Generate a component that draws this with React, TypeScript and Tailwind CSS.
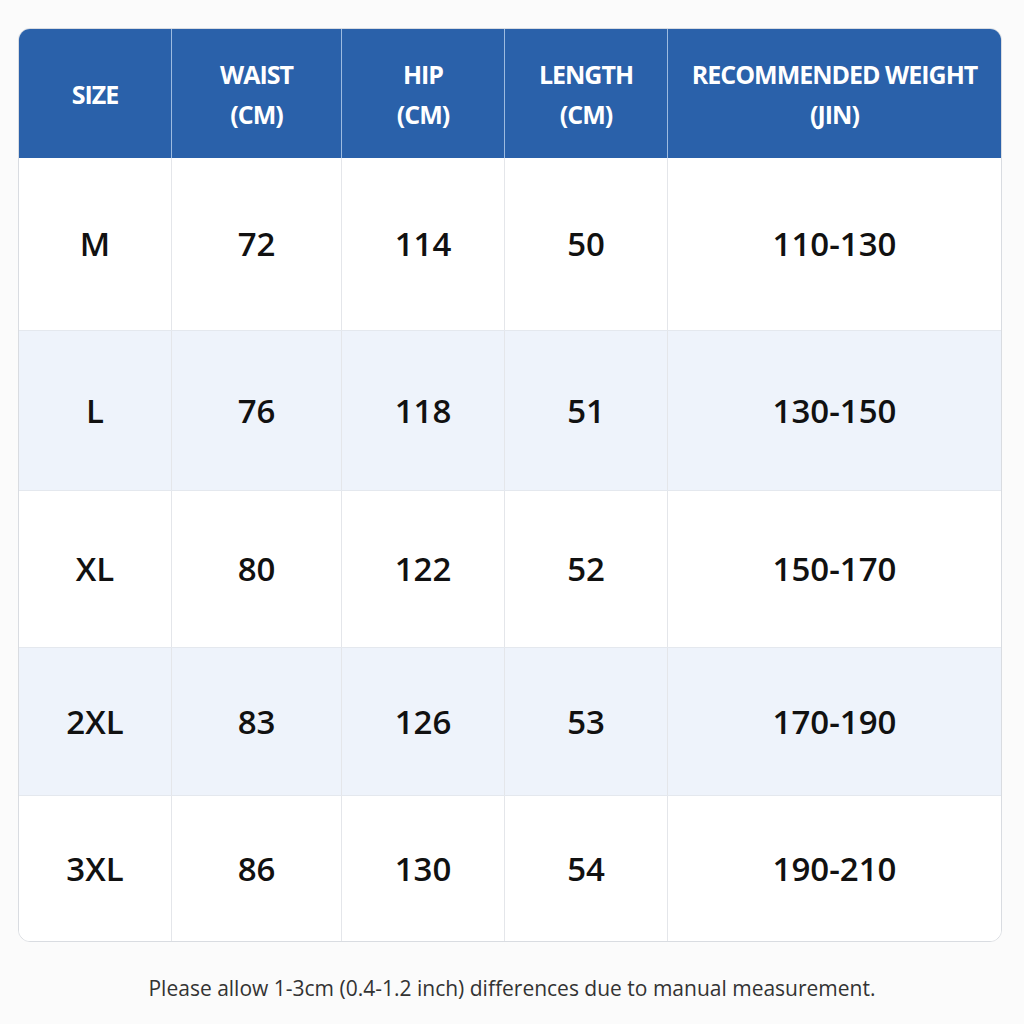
const HEADERS = [
  ["SIZE"],
  ["WAIST", "(CM)"],
  ["HIP", "(CM)"],
  ["LENGTH", "(CM)"],
  ["RECOMMENDED WEIGHT", "(JIN)"],
];

const ROWS = [
  { h: "h-[172px]", cells: ["M", "72", "114", "50", "110-130"], alt: false },
  { h: "h-[160px]", cells: ["L", "76", "118", "51", "130-150"], alt: true },
  { h: "h-[157px]", cells: ["XL", "80", "122", "52", "150-170"], alt: false },
  { h: "h-[148px]", cells: ["2XL", "83", "126", "53", "170-190"], alt: true },
  { h: "h-[146px]", cells: ["3XL", "86", "130", "54", "190-210"], alt: false },
];

const COLS = "grid grid-cols-[152px_170px_163px_163px_1fr]";

export default function App() {
  return (
    <div className="min-h-[1024px] w-[1024px] bg-[#fbfbfb] pt-[28px] font-['Open_Sans',sans-serif]">
      <div className="ml-[18px] w-[984px] overflow-hidden rounded-[12px] border border-[#d9dce1] bg-white">
        {/* header */}
        <div className={`${COLS} h-[129px] bg-[#2a61aa] text-white`}>
          {HEADERS.map((lines, i) => (
            <div
              key={i}
              className={`flex flex-col items-center justify-center text-[25px] font-bold leading-[40px] tracking-[-0.04em] ${
                i > 0 ? "border-l border-[#9dbbe0]" : ""
              }`}
            >
              {lines.map((l) => (
                <span key={l}>{l}</span>
              ))}
            </div>
          ))}
        </div>

        {/* rows */}
        {ROWS.map((row, r) => (
          <div
            key={r}
            className={`${COLS} ${row.h} ${row.alt ? "bg-[#eef3fb]" : "bg-white"} ${
              r > 0 ? "border-t border-[#e4e8ee]" : ""
            }`}
          >
            {row.cells.map((c, i) => (
              <div
                key={i}
                className={`flex items-center justify-center text-[33px] font-semibold text-[#111] ${
                  i > 0 ? "border-l border-[#e4e6ea]" : ""
                }`}
              >
                {c}
              </div>
            ))}
          </div>
        ))}
      </div>

      <p className="mt-[31px] text-center text-[21px] text-[#333]">
        Please allow 1-3cm (0.4-1.2 inch) differences due to manual measurement.
      </p>
    </div>
  );
}
